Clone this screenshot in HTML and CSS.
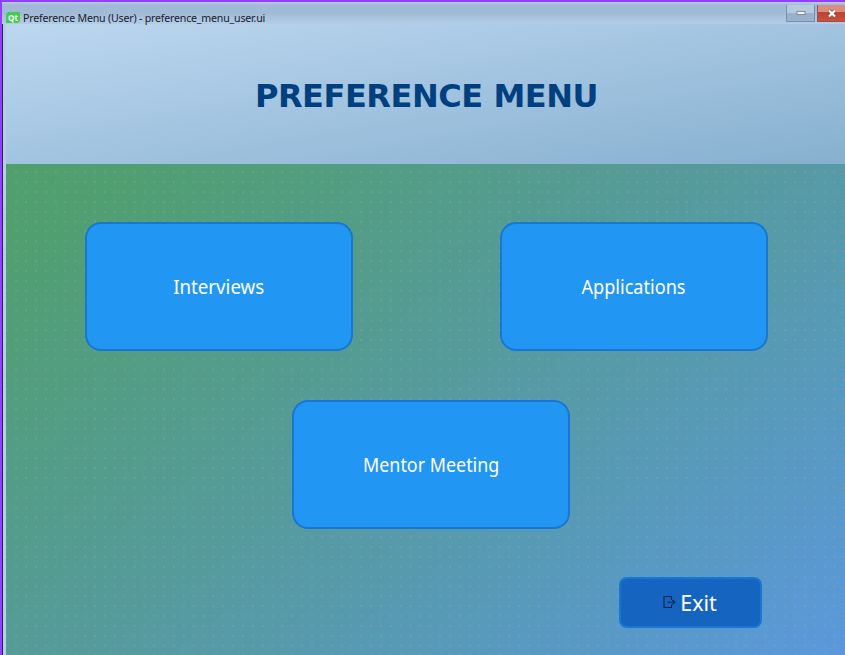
FILE: index.html
```
<!DOCTYPE html>
<html lang="en">
<head>
<meta charset="utf-8">
<title>Preference Menu (User)</title>
<link rel="stylesheet" href="styles.css">
</head>
<body>
<div class="window">
  <header class="titlebar">
    <svg class="logo" width="14" height="12" viewBox="0 0 14 12"><path d="M2 0H14V9L12 11H0V2Z" fill="#41cd52"/><text x="7" y="8.7" text-anchor="middle" class="logo-text">Qt</text></svg>
    <span class="caption">Preference Menu (User) - preference_menu_user.ui</span>
    <div class="controls">
      <button class="control minimize" aria-label="Minimize"><svg width="10" height="4"><rect x="1" y=".5" width="8" height="3" fill="#f4f4f4" stroke="#747b87" stroke-width=".8"/></svg></button>
      <button class="control close" aria-label="Close"><svg width="10" height="9" viewBox="0 0 10 9"><path d="M2 1.5L8 7.5M8 1.5L2 7.5" stroke="#69525a" stroke-width="3.4"/><path d="M2 1.5L8 7.5M8 1.5L2 7.5" stroke="#fff" stroke-width="2.2"/></svg></button>
    </div>
  </header>
  <main class="form">
    <div class="banner"><h1>PREFERENCE MENU</h1></div>
    <div class="content">
      <div class="row">
        <button class="card"><span class="label interviews">Interviews</span></button>
        <button class="card"><span class="label applications">Applications</span></button>
      </div>
      <button class="card mentor"><span class="label meeting">Mentor Meeting</span></button>
      <button class="exit"><svg width="13" height="14" viewBox="0 0 13 14" fill="none" stroke="#0a2344" stroke-width="1.1"><path d="M8.5 5V1.5H1V12.5H8.5V9.5M4.5 7.2H12M9.5 5L12 7.2L9.5 9.4"/></svg><span class="exit-label">Exit</span></button>
    </div>
  </main>
</div>
</body>
</html>
```
FILE: styles.css
```
* { box-sizing: border-box; }
body { margin: 0; overflow: hidden; }
button { font: inherit; padding: 0; cursor: pointer; }
.window {
  width: 845px;
  height: 655px;
  display: flex;
  flex-direction: column;
  border-top: 2px solid #9040ff;
  border-left: 2px solid #9040ff;
  background: linear-gradient(90deg, #27272d 1.5px, #b3cee9 1.5px);
}
.titlebar {
  height: 22px;
  display: flex;
  align-items: flex-start;
  padding-left: 4px;
  background: linear-gradient(#b5cce2 0, #a2bad7 3px, #a2bad7 11px, #b2cce5 21px);
}
.logo { margin-top: 10px; flex: none; }
.logo-text { font: bold 8px "Open Sans", sans-serif; fill: #fff; }
.caption {
  margin: 9px 0 0 3px;
  font: 11px/14px "Noto Sans", sans-serif;
  letter-spacing: -0.21px;
  color: #16202c;
  white-space: nowrap;
  transform: scaleX(.965);
  transform-origin: left;
}
.controls { display: flex; margin: 3px 0 0 auto; gap: 2px; }
.control {
  height: 17px;
  display: flex;
  align-items: center;
  justify-content: center;
  border: 1px solid #7890ae;
  border-top: 0;
}
.minimize { width: 29px; background: linear-gradient(#b5c9df 50%, #98b1cf 50%); }
.close {
  width: 28px;
  border-color: #90525a;
  border-right: 0;
  background: linear-gradient(#dc8c80 45%, #bd432f 45%, #cb5137);
}
.form {
  flex: 1;
  min-height: 0;
  margin-left: 4px;
  background:
    radial-gradient(circle at 4.93px 4.93px, rgba(190, 165, 160, .5) .45px, transparent .95px) -4.6px -4.5px / 9.868px 9.868px,
    linear-gradient(to bottom right, #4f9f68 0, #509f70 18%, #559b9c 54%, #5a98dc 100%);
}
.banner {
  height: 139.5px;
  display: flex;
  align-items: center;
  justify-content: center;
  background: linear-gradient(to bottom right, #bdd7f0, #86b0cf);
}
h1 {
  margin: 4px 0 0 2px;
  font: bold 32px/40px "DejaVu Sans", sans-serif;
  color: #004080;
  letter-spacing: -.45px;
  white-space: nowrap;
}
.content { padding: 58px 77.5px 0 79px; display: flex; flex-direction: column; }
.row { display: flex; justify-content: space-between; }
.card {
  width: 268px;
  height: 129px;
  border: 2px solid #1976d2;
  border-radius: 16px;
  background: #2196f3;
  color: #fff;
  font: 20px/28px "Noto Sans", sans-serif;
  white-space: nowrap;
}
.label { display: inline-block; padding-top: 2px; }
.interviews { transform: scaleX(.935); }
.applications { transform: scaleX(.905); }
.meeting { transform: scaleX(.895); }
.mentor { width: 278px; margin: 49px 0 0 207px; }
.exit {
  width: 143px;
  height: 51px;
  margin: 48px 6px 0 auto;
  display: flex;
  align-items: center;
  justify-content: center;
  gap: 4px;
  border: 2px solid #1976d2;
  border-radius: 8px;
  background: #1565c0;
  color: #fff;
  font: 21.5px/28px "Noto Sans", sans-serif;
}
.exit-label { padding-top: 2px; }
```
